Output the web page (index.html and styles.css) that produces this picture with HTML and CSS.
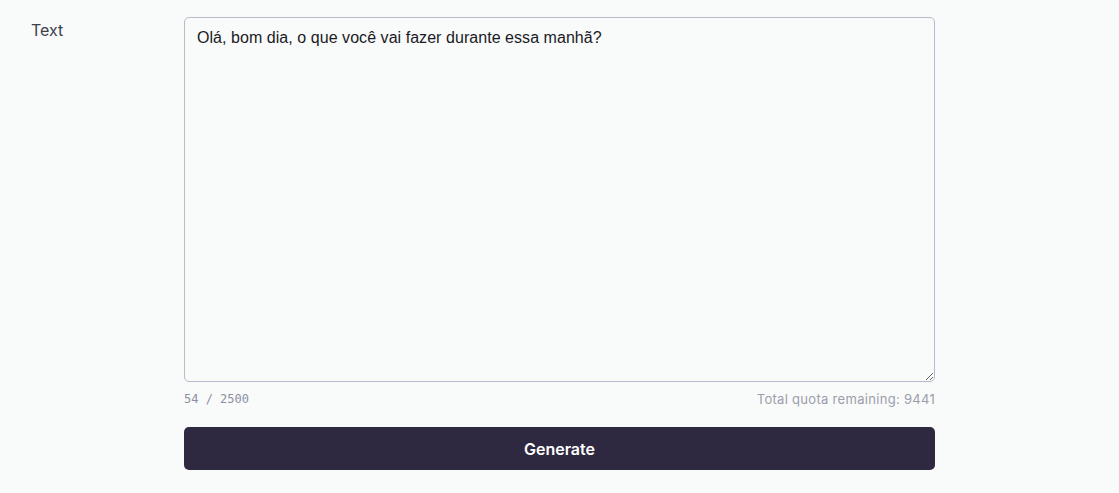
FILE: index.html
```html
<!DOCTYPE html>
<html>
<head>
<meta charset="utf-8">
<link rel="stylesheet" href="styles.css">
</head>
<body>
<div class="row">
  <label class="label" for="t">Text</label>
  <div class="field">
    <textarea id="t" class="input">Olá, bom dia, o que você vai fazer durante essa manhã?</textarea>
    <div class="meta">
      <span class="count">54 / 2500</span>
      <span class="quota">Total quota remaining: 9441</span>
    </div>
    <button class="btn">Generate</button>
  </div>
</div>
</body>
</html>
```
FILE: styles.css
```css
html, body {
  margin: 0;
  background: #f9fafa;
  font-family: Inter, "Noto Sans", sans-serif;
}
.row {
  display: flex;
  padding: 17px 0 0 31px;
}
.label {
  width: 153px;
  font-size: 16px;
  color: #3f3f4a;
  padding-top: 3px;
}
.field {
  width: 751px;
  display: flex;
  flex-direction: column;
}
.input {
  box-sizing: border-box;
  width: 751px;
  height: 365px;
  margin: 0;
  border: 1px solid #b9bacb;
  border-radius: 5px;
  background: #f9fafa;
  padding: 9px 12px;
  font-family: "Liberation Sans", Arial, sans-serif;
  font-size: 16px;
  letter-spacing: 0.05px;
  line-height: 22px;
  color: #1a1a1f;
  resize: vertical;
  outline: none;
}
.meta {
  display: flex;
  justify-content: space-between;
  align-items: center;
  height: 32px;
  padding-top: 1px;
  box-sizing: border-box;
}
.count {
  font-family: "DejaVu Sans Mono", monospace;
  font-size: 12px;
  color: #8a91a3;
}
.quota {
  font-size: 13px;
  letter-spacing: 0.3px;
  color: #9a9eab;
}
.btn {
  margin-top: 13px;
  height: 43px;
  border: none;
  border-radius: 5px;
  background: #2e2940;
  color: #ffffff;
  font-family: Inter, "Noto Sans", sans-serif;
  font-size: 16px;
  font-weight: 600;
  cursor: pointer;
}
```
